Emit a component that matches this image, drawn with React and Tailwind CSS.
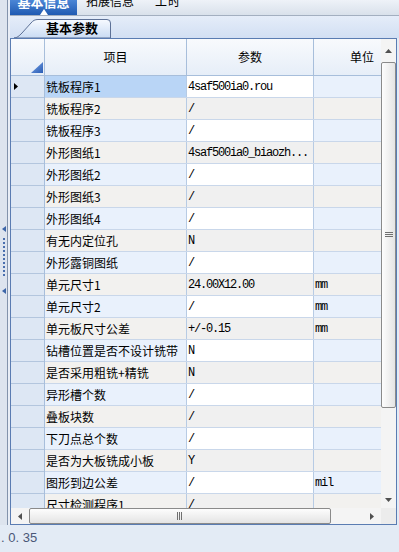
import React from 'react'

const ROWS = [
  ['铣板程序1', '4saf500ia0.rou', ''],
  ['铣板程序2', '/', ''],
  ['铣板程序3', '/', ''],
  ['外形图纸1', '4saf500ia0_biaozh...', ''],
  ['外形图纸2', '/', ''],
  ['外形图纸3', '/', ''],
  ['外形图纸4', '/', ''],
  ['有无内定位孔', 'N', ''],
  ['外形露铜图纸', '/', ''],
  ['单元尺寸1', '24.00X12.00', 'mm'],
  ['单元尺寸2', '/', 'mm'],
  ['单元板尺寸公差', '+/-0.15', 'mm'],
  ['钻槽位置是否不设计铣带', 'N', ''],
  ['是否采用粗铣+精铣', 'N', ''],
  ['异形槽个数', '/', ''],
  ['叠板块数', '/', ''],
  ['下刀点总个数', '/', ''],
  ['是否为大板铣成小板', 'Y', ''],
  ['图形到边公差', '/', 'mil'],
  ['尺寸检测程序1', '/', ''],
]

const CJK = "font-['SimSun','Noto_Sans_CJK_SC',sans-serif]"
const MONO = "font-['Liberation_Mono',monospace] text-[12px] tracking-[-1.2px]"

function rowColors(i) {
  if (i === 0) return ['bg-[#b9d5f6]', 'bg-white', 'bg-[#e9f1fc]']
  if (i % 2 === 1) return ['bg-[#f2f1ef]', 'bg-[#f0f0f0]', 'bg-[#f2f1ef]']
  return ['bg-[#e9f1fc]', 'bg-white', 'bg-[#e9f1fc]']
}

function LeftStrip() {
  return (
    <div className="w-[10px] flex flex-shrink-0">
      <div className="w-[7px] bg-[#dde4ee] flex flex-col items-center pt-[226px]">
        <svg width="4" height="6" viewBox="0 0 4 6"><path d="M4 0 L0 3 L4 6Z" fill="#3d66a8" /></svg>
        <div className="h-[38px] mt-[6px] border-l-2 border-dotted border-[#4a6fae]" />
        <div className="h-[12px]" />
        <svg width="4" height="6" viewBox="0 0 4 6"><path d="M4 0 L0 3 L4 6Z" fill="#3d66a8" /></svg>
      </div>
      <div className="w-[1px] bg-[#8393ab]" />
      <div className="w-[2px] bg-[#e9eef6]" />
    </div>
  )
}

function TabBar() {
  return (
    <div className="h-[16px] flex items-stretch bg-gradient-to-b from-[#eef2f8] to-[#d9e1eb] border-b border-[#a3afc0] overflow-hidden flex-shrink-0">
      <div className="w-[67px] bg-gradient-to-b from-[#4b86d6] to-[#1f5ab2] flex flex-col items-center">
        <span className="text-[13px] leading-none font-bold text-white mt-[-4px]">基本信息</span>
        <svg className="mt-[0px]" width="8" height="6" viewBox="0 0 8 6"><path d="M4 0 L8 6 L0 6Z" fill="#ffffff" /></svg>
      </div>
      <span className="ml-[9px] text-[12px] leading-none text-black mt-[-4px]">拓展信息</span>
      <span className="ml-[21px] text-[12px] leading-none text-black mt-[-4px] tracking-[1px]">工时</span>
    </div>
  )
}

function SubTabStrip() {
  return (
    <div className="h-[22px] flex items-end pl-[4px] bg-gradient-to-b from-[#e5edf9] to-[#d2dff3] flex-shrink-0">
      <div className="relative w-[98px] h-[19px] flex items-center pl-[32px]">
        <svg className="absolute inset-0" width="98" height="19" viewBox="0 0 98 19">
          <defs>
            <linearGradient id="st" x1="0" y1="0" x2="0" y2="1">
              <stop offset="0" stopColor="#f7faff" />
              <stop offset="1" stopColor="#c9dbf3" />
            </linearGradient>
          </defs>
          <path d="M0 19 C3 19 5 17 8 14 L17 4 C19 1.5 21 0.5 24 0.5 L93 0.5 Q96.5 0.5 96.5 4 L96.5 19Z" fill="url(#st)" stroke="#5d7197" strokeWidth="1" />
        </svg>
        <span className="relative text-[13px] leading-none font-bold text-black">基本参数</span>
      </div>
    </div>
  )
}

function VScroll() {
  return (
    <div className="w-[15px] flex flex-col bg-[#f4f4f4] flex-shrink-0">
      <div className="h-[23px] flex items-center justify-center">
        <svg width="7" height="4" viewBox="0 0 7 4"><path d="M3.5 0 L7 4 L0 4Z" fill="#505050" /></svg>
      </div>
      <div className="h-[346px] rounded-[2px] border border-[#8a8a8a] bg-gradient-to-r from-[#fdfdfd] to-[#e4e4e4] flex items-center justify-center">
        <svg width="8" height="6" viewBox="0 0 8 6">
          <path d="M0 0.5H8M0 2.5H8M0 4.5H8" stroke="#707070" strokeWidth="1" />
        </svg>
      </div>
      <div className="flex-1" />
      <div className="h-[16px] flex items-center justify-center">
        <svg width="7" height="4" viewBox="0 0 7 4"><path d="M0 0 L7 0 L3.5 4Z" fill="#505050" /></svg>
      </div>
    </div>
  )
}

function HScroll() {
  return (
    <div className="h-[16px] flex bg-[#f4f4f4] flex-shrink-0">
      <div className="w-[18px] flex items-center justify-center">
        <svg width="4" height="7" viewBox="0 0 4 7"><path d="M4 0 L0 3.5 L4 7Z" fill="#505050" /></svg>
      </div>
      <div className="w-[302px] rounded-[2px] border border-[#8a8a8a] bg-gradient-to-b from-[#fdfdfd] to-[#e4e4e4] flex items-center justify-center">
        <svg width="6" height="8" viewBox="0 0 6 8">
          <path d="M0.5 0V8M2.5 0V8M4.5 0V8" stroke="#707070" strokeWidth="1" />
        </svg>
      </div>
      <div className="flex-1" />
      <div className="w-[18px] flex items-center justify-center">
        <svg width="4" height="7" viewBox="0 0 4 7"><path d="M0 0 L4 3.5 L0 7Z" fill="#505050" /></svg>
      </div>
      <div className="w-[15px] bg-[#ececec]" />
    </div>
  )
}

function Grid() {
  return (
    <div className={`flex-1 flex flex-col border border-[#5a7cb2] bg-white mr-[2px] min-h-0 ${CJK}`}>
      <div className="flex-1 flex min-h-0">
        {/* row header column */}
        <div className="w-[34px] flex flex-col flex-shrink-0 border-r border-[#a7bedb] bg-[#dde7f4] overflow-hidden">
          <div className="h-[37px] flex-shrink-0 border-b border-[#a7bedb] bg-gradient-to-b from-[#f8fafd] to-[#e6eef8] flex items-end justify-end pb-[2px] pr-[1px]">
            <svg width="12" height="11" viewBox="0 0 12 11">
              <defs>
                <linearGradient id="tri" x1="0" y1="0" x2="1" y2="1">
                  <stop offset="0" stopColor="#7aa6e6" />
                  <stop offset="1" stopColor="#2a5cb5" />
                </linearGradient>
              </defs>
              <path d="M12 0 L12 11 L0 11Z" fill="url(#tri)" />
            </svg>
          </div>
          {ROWS.map((r, i) => (
            <div key={r[0]} className="h-[22px] flex-shrink-0 border-b border-[#b3c6de] flex items-center pl-[3px]">
              {i === 0 && (
                <svg width="4" height="7" viewBox="0 0 4 7"><path d="M0 0 L4 3.5 L0 7Z" fill="#000000" /></svg>
              )}
            </div>
          ))}
        </div>
        {/* data columns */}
        <div className="flex-1 flex flex-col overflow-hidden min-w-0">
          <div className="h-[37px] flex flex-shrink-0 border-b border-[#a7bedb] bg-gradient-to-b from-[#f8fafd] to-[#e6eef8] text-[12px] text-black">
            <div className="w-[142px] flex-shrink-0 border-r border-[#a7bedb] flex items-center justify-center">项目</div>
            <div className="w-[127px] flex-shrink-0 border-r border-[#a7bedb] flex items-center justify-center">参数</div>
            <div className="w-[96px] flex-shrink-0 flex items-center justify-center">单位</div>
          </div>
          {ROWS.map((r, i) => {
            const [c1, c2, c3] = rowColors(i)
            return (
              <div key={r[0]} className="h-[22px] flex flex-shrink-0 border-b border-[#c9d7ea] text-black">
                <div className={`w-[142px] flex-shrink-0 border-r border-[#b7cbe4] flex items-center pl-[1px] text-[12px] leading-none whitespace-nowrap ${c1}`}>{r[0]}</div>
                <div className={`w-[127px] flex-shrink-0 border-r border-[#b7cbe4] flex items-center pl-[1px] whitespace-nowrap ${MONO} ${c2}`}>{r[1]}</div>
                <div className={`w-[96px] flex-shrink-0 flex items-center pl-[1px] ${MONO} ${c3}`}>{r[2]}</div>
              </div>
            )
          })}
        </div>
        <VScroll />
      </div>
      <HScroll />
    </div>
  )
}

export default function App() {
  return (
    <div className="w-[399px] h-[552px] flex flex-col bg-[#e3ebf5] overflow-hidden font-['Liberation_Sans','Noto_Sans_CJK_SC',sans-serif]">
      <div className="h-[525px] flex flex-shrink-0">
        <LeftStrip />
        <div className="flex-1 flex flex-col min-w-0">
          <TabBar />
          <SubTabStrip />
          <Grid />
        </div>
      </div>
      <div className="flex-1 pl-[1px] pt-[6px] text-[13px] leading-none text-[#4a5777]">. 0. 35</div>
    </div>
  )
}
